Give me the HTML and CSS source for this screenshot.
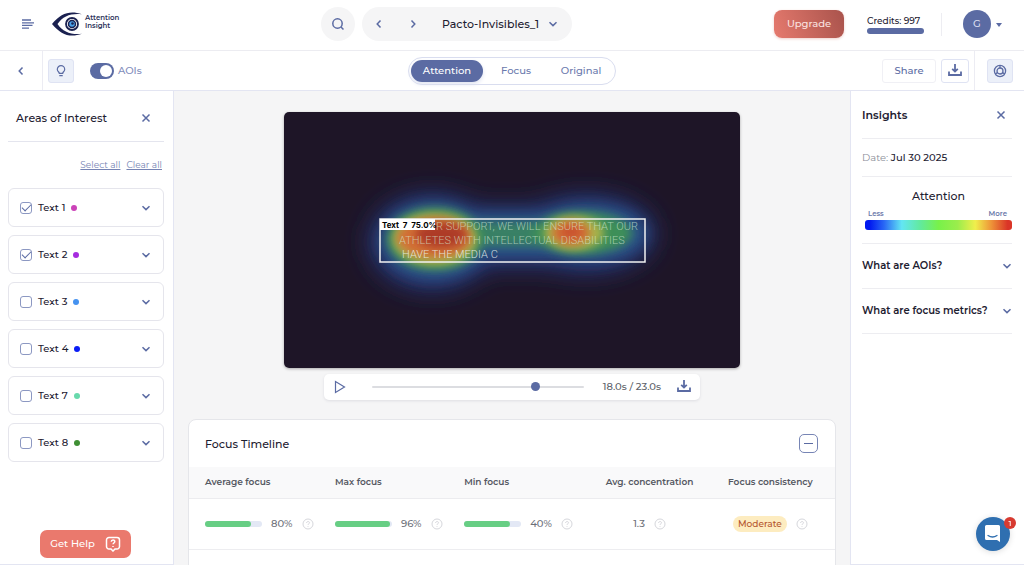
FILE: index.html
```html
<!DOCTYPE html>
<html lang="en">
<head>
<meta charset="utf-8">
<meta name="viewport" content="width=device-width, initial-scale=1">
<title>Attention Insight</title>
<link rel="stylesheet" href="styles.css">
</head>
<body>
<svg class="sprite" aria-hidden="true">
  <symbol id="down" viewBox="0 0 10 10"><path d="M1.5 3.2 5 6.6 8.500 3.200"/></symbol>
  <symbol id="left" viewBox="0 0 10 10"><path d="M6.500 1.500 3.200 5 6.500 8.500"/></symbol>
  <symbol id="right" viewBox="0 0 10 10"><path d="M3.500 1.500 6.800 5 3.500 8.500"/></symbol>
  <symbol id="close" viewBox="0 0 10 10"><path d="M1.500 1.500 8.500 8.500M8.500 1.500 1.500 8.500"/></symbol>
  <symbol id="download" viewBox="0 0 14 14"><path d="M7 0v7M4.200 4.800 7 7.600l2.800-2.800M1 7.500V11h12V7.500" stroke-width="1.800"/></symbol>
  <symbol id="hint" viewBox="0 0 12 12"><circle cx="6" cy="6" r="5"/><path d="M4.600 5c0-2 2.900-1.900 2.900-.2 0 1-1.500 1-1.500 2.100M6 8v.8"/></symbol>
</svg>

<header class="header">
  <div class="brand">
    <button class="bare" aria-label="Menu"><svg class="menu-icon" viewBox="0 0 12 10"><path d="M0 1h9M0 3.800h12M0 6.400h10.500M0 9.200h7"/></svg></button>
    <a class="logo" href="#">
      <svg class="eye" viewBox="0 0 31 24" aria-hidden="true">
        <path fill="#1b2150" d="M30 2.200C18-2 9 1 0 12c9 11 18 14 30 9.800C19 23 11 20 5.500 12 11 4 19 1 30 2.200Z"/>
        <circle cx="20" cy="12" r="6" fill="#fff" stroke="#1b2150" stroke-width="1.800"/>
        <circle cx="20" cy="12" r="3.500" fill="#4aa0e8" stroke="#1b2150" stroke-width="1.500"/>
        <circle cx="20.500" cy="11.500" r="1.300" fill="#1b2150"/>
      </svg>
      <span class="wordmark"><span>Attention</span><span>Insight</span></span>
    </a>
  </div>
  <div class="finder">
    <button class="round" aria-label="Search"><svg class="search-icon" viewBox="0 0 14 14"><circle cx="6.500" cy="6.500" r="4.700"/><path d="m10 10 2.500 2.500"/></svg></button>
    <div class="switcher">
      <button class="bare" aria-label="Previous"><svg class="icon"><use href="#left"/></svg></button>
      <button class="bare" aria-label="Next"><svg class="icon"><use href="#right"/></svg></button>
      <button class="bare project">Pacto-Invisibles_1 <svg class="icon"><use href="#down"/></svg></button>
    </div>
  </div>
  <div class="account">
    <button class="upgrade">Upgrade</button>
    <div class="credits"><span>Credits: 997</span><div class="credit-bar"></div></div>
    <button class="bare profile" aria-label="Profile"><span class="avatar">G</span><span class="caret"></span></button>
  </div>
</header>

<nav class="toolbar">
  <div class="tools">
    <button class="bare back" aria-label="Back"><svg class="icon"><use href="#left"/></svg></button>
    <button class="square tinted" aria-label="Tips"><svg class="bulb" viewBox="0 0 10 12"><path d="M3.300 8.300C3.300 7 1.300 6.300 1.300 4.400a3.700 3.700 0 0 1 7.400 0c0 1.900-2 2.600-2 3.900ZM3.300 10.700h3.400"/></svg></button>
    <label class="toggle"><input type="checkbox" checked>AOIs</label>
  </div>
  <div class="tabs">
    <button class="tab active">Attention</button>
    <button class="tab">Focus</button>
    <button class="tab">Original</button>
  </div>
  <div class="tools end">
    <button class="share">Share</button>
    <button class="square wide" aria-label="Download"><svg class="dl"><use href="#download"/></svg></button>
    <div class="target-cell"><button class="square tinted" aria-label="Insights"><svg class="target" viewBox="0 0 14 14"><circle cx="7" cy="7" r="5.600"/><circle cx="7" cy="7" r="3"/><path d="M7 1.400V4M4.600 8.600 2.200 9.800M9.400 8.600l2.400 1.200"/></svg></button></div>
  </div>
</nav>

<div class="layout">
  <aside class="areas">
    <div class="areas-head"><h2>Areas of Interest</h2><button class="bare" aria-label="Close"><svg class="icon"><use href="#close"/></svg></button></div>
    <div class="links"><a href="#">Select all</a><a href="#">Clear all</a></div>
    <ul class="list">
      <li><label><input type="checkbox" checked>Text 1<i class="dot pink"></i></label><button class="bare" aria-label="Expand Text 1"><svg class="icon"><use href="#down"/></svg></button></li>
      <li><label><input type="checkbox" checked>Text 2<i class="dot purple"></i></label><button class="bare" aria-label="Expand Text 2"><svg class="icon"><use href="#down"/></svg></button></li>
      <li><label><input type="checkbox">Text 3<i class="dot sky"></i></label><button class="bare" aria-label="Expand Text 3"><svg class="icon"><use href="#down"/></svg></button></li>
      <li><label><input type="checkbox">Text 4<i class="dot blue"></i></label><button class="bare" aria-label="Expand Text 4"><svg class="icon"><use href="#down"/></svg></button></li>
      <li><label><input type="checkbox">Text 7<i class="dot mint"></i></label><button class="bare" aria-label="Expand Text 7"><svg class="icon"><use href="#down"/></svg></button></li>
      <li><label><input type="checkbox">Text 8<i class="dot green"></i></label><button class="bare" aria-label="Expand Text 8"><svg class="icon"><use href="#down"/></svg></button></li>
    </ul>
    <button class="help">Get Help <svg class="help-icon" viewBox="0 0 16 16"><path d="M4 1.500h8a2.500 2.500 0 0 1 2.500 2.500v6.500A2.500 2.500 0 0 1 12 13h-2l-2 2-2-2H4a2.500 2.500 0 0 1-2.500-2.500V4A2.500 2.500 0 0 1 4 1.500Z"/><path d="M6.300 5.800c0-2.300 3.500-2.200 3.500-.2C9.800 7 8 7 8 8.300M8 10v1"/></svg></button>
  </aside>

  <main class="main">
    <svg class="video" viewBox="0 0 456 256" role="img" aria-label="Attention heatmap">
      <defs>
        <filter id="b14" x="-50%" y="-100%" width="200%" height="300%"><feGaussianBlur stdDeviation="13"/></filter>
        <filter id="b8" x="-50%" y="-100%" width="200%" height="300%"><feGaussianBlur stdDeviation="8"/></filter>
        <filter id="b5" x="-50%" y="-100%" width="200%" height="300%"><feGaussianBlur stdDeviation="5"/></filter>
        <filter id="b4" x="-50%" y="-100%" width="200%" height="300%"><feGaussianBlur stdDeviation="4"/></filter>
      </defs>
      <rect width="456" height="256" fill="#1e1527"/>
      <g filter="url(#b14)" fill="#27377b"><ellipse cx="148" cy="130" rx="62" ry="47"/><rect x="140" y="96" width="175" height="58" rx="28"/><ellipse cx="302" cy="122" rx="68" ry="38"/></g>
      <g filter="url(#b8)" fill="#2c5688"><ellipse cx="150" cy="129" rx="53" ry="38"/><rect x="160" y="102" width="150" height="42" rx="18"/><ellipse cx="304" cy="121" rx="58" ry="28"/></g>
      <g filter="url(#b5)" fill="#3d8f59"><ellipse cx="151" cy="127" rx="48" ry="31"/><rect x="170" y="110" width="100" height="24" rx="12" opacity=".75"/><ellipse cx="298" cy="121" rx="50" ry="21"/></g>
      <g filter="url(#b4)" fill="#a9b34b"><ellipse cx="151" cy="127" rx="42" ry="26"/><ellipse cx="290" cy="121" rx="30" ry="17"/></g>
      <g filter="url(#b4)" fill="#d37034"><ellipse cx="150" cy="126" rx="37" ry="20"/><ellipse cx="287" cy="121" rx="19" ry="12"/></g>
      <g filter="url(#b5)"><ellipse cx="157" cy="123" rx="26" ry="13" fill="#ad3a26"/><ellipse cx="287" cy="120" rx="11" ry="6" fill="#c84e2e"/></g>
      <g class="caption">
        <text x="354" y="118" text-anchor="end">R SUPPORT, WE WILL ENSURE THAT OUR</text>
        <text x="115" y="132">ATHLETES WITH INTELLECTUAL DISABILITIES</text>
        <text x="118" y="146" class="bright">HAVE THE MEDIA C</text>
      </g>
      <rect x="96" y="107" width="265" height="43" fill="none" stroke="#f2f2f2" stroke-width="1.500"/>
      <rect x="96" y="107" width="55" height="11" fill="#fff"/>
      <text x="98" y="116" class="tag">Text&#160; 7&#160; 75.0%</text>
    </svg>
    <div class="player">
      <button class="bare" aria-label="Play"><svg class="play" viewBox="0 0 12 14"><path d="M1.500 1.500v11L10.500 7Z"/></svg></button>
      <input class="seek" type="range" min="0" max="23" step="0.1" value="18" aria-label="Playback position">
      <span class="time">18.0s / 23.0s</span>
      <button class="bare" aria-label="Download video"><svg class="dl"><use href="#download"/></svg></button>
    </div>
    <section class="card">
      <div class="card-head"><h2>Focus Timeline</h2><button class="collapse" aria-label="Collapse"><span></span></button></div>
      <table>
        <thead><tr><th class="first">Average focus</th><th>Max focus</th><th>Min focus</th><th class="mid conc">Avg. concentration</th><th class="mid">Focus consistency</th></tr></thead>
        <tbody>
          <tr>
            <td class="first"><div class="metric"><div class="bar"><div style="width:80%"></div></div><span>80%</span><svg class="hint"><use href="#hint"/></svg></div></td>
            <td><div class="metric"><div class="bar"><div style="width:96%"></div></div><span>96%</span><svg class="hint"><use href="#hint"/></svg></div></td>
            <td><div class="metric"><div class="bar"><div style="width:80%"></div></div><span>40%</span><svg class="hint"><use href="#hint"/></svg></div></td>
            <td><div class="metric centered"><span>1.3</span><svg class="hint"><use href="#hint"/></svg></div></td>
            <td><div class="metric centered"><span class="badge">Moderate</span><svg class="hint"><use href="#hint"/></svg></div></td>
          </tr>
        </tbody>
      </table>
      <div class="rest"></div>
    </section>
  </main>

  <aside class="insights">
    <div class="insights-head"><h2>Insights</h2><button class="bare" aria-label="Close insights"><svg class="icon"><use href="#close"/></svg></button></div>
    <p class="date">Date: <b>Jul 30 2025</b></p>
    <div class="legend">
      <h3>Attention</h3>
      <div class="scale"><span>Less</span><span>More</span></div>
      <div class="spectrum"></div>
    </div>
    <button class="question">What are AOIs?<svg class="icon"><use href="#down"/></svg></button>
    <button class="question">What are focus metrics?<svg class="icon"><use href="#down"/></svg></button>
  </aside>
</div>

<button class="chat" aria-label="Open chat">
  <svg viewBox="0 0 18 20" aria-hidden="true"><path fill="#fff" d="M2.500 1h12A1.500 1.500 0 0 1 16 2.500V18l-3-2H2.500A1.500 1.500 0 0 1 1 14.500v-12A1.500 1.500 0 0 1 2.500 1Z"/><path d="M4 11.500q4.500 3 9 0" fill="none" stroke="#2f6fb0" stroke-width="1.300" stroke-linecap="round"/></svg>
  <span>1</span>
</button>
</body>
</html>
```
FILE: styles.css
```css
* { box-sizing: border-box; }
:root { --blue: #5b6ba3; --line: #e3e5f2; --ink: #1d2030; }
body {
  margin: 0; height: 100vh; display: flex; flex-direction: column; overflow: hidden;
  background: #fff; color: var(--ink);
  font: 500 10px/16px Montserrat, Inter, "Liberation Sans", sans-serif;
}
button, input { font: inherit; color: inherit; margin: 0; }
button { cursor: pointer; padding: 0; white-space: nowrap; }
h2, h3, p, ul { margin: 0; padding: 0; }
svg { display: block; fill: none; stroke: var(--blue); stroke-width: 1.5; }
.eye, .chat svg { stroke: none; }
.sprite { position: absolute; width: 0; height: 0; }
.bare { border: 0; background: none; display: flex; align-items: center; }
.icon { width: 10px; height: 10px; }

.header {
  flex: none; height: 51px; padding: 0 22px 2px; border-bottom: 1px solid #ececf1;
  display: flex; align-items: center; justify-content: space-between;
}
.brand, .finder, .account, .switcher, .logo, .profile { display: flex; align-items: center; }
.brand { gap: 18px; }
.menu-icon { width: 12px; height: 10px; stroke-width: 1.3; }
.logo { gap: 2px; color: #2b3158; text-decoration: none; font-size: 7px; line-height: 8px; font-weight: 600; }
.wordmark { display: grid; padding-bottom: 4px; }
.eye { width: 31px; height: 24px; }
.finder { gap: 7px; }
.round { width: 34px; height: 34px; border: 0; border-radius: 50%; background: #f5f5f6; display: grid; place-items: center; }
.search-icon { width: 14px; height: 14px; }
.switcher { width: 210px; height: 34px; padding: 0 14px 0 12px; border-radius: 17px; background: #f5f5f6; }
.switcher .bare + .bare { margin-left: 24px; }
.switcher .bare + .project { margin-left: auto; gap: 9px; font-size: 11px; }
.upgrade {
  width: 70px; height: 28px; border: 0; border-radius: 8px; color: #fbe3e0;
  background: linear-gradient(70deg, #e67a6e, #a9534c); box-shadow: 0 1px 3px #efcfcb;
}
.credits { margin-left: 23px; width: 57px; font-size: 9px; line-height: 12px; white-space: nowrap; }
.credit-bar { height: 6px; margin-top: 1px; border-radius: 3px; background: var(--blue); }
.profile { margin-left: 17px; padding-left: 21px; gap: 5px; height: 23px; border-left: 1px solid #ededf2; }
.avatar { width: 28px; height: 28px; border-radius: 50%; background: var(--blue); color: #d9def0; line-height: 28px; text-align: center; }
.caret { border: 3px solid transparent; border-top: 4px solid var(--blue); border-bottom: 0; margin-top: 2px; }

.toolbar { flex: none; height: 40px; border-bottom: 1px solid var(--line); display: grid; grid-template-columns: 1fr auto 1fr; align-items: center; color: var(--blue); }
.tools { display: flex; align-items: center; height: 100%; }
.back { width: 43px; height: 100%; justify-content: center; border-right: 1px solid #ececf3; }
.square { width: 26px; height: 24px; border: 1px solid #dfe3f3; border-radius: 3px; background: #fff; display: grid; place-items: center; }
.tinted { background: #ecf0f9; }
.tools > .tinted { margin-left: 5px; }
.bulb { width: 10px; height: 12px; stroke-width: 1.2; }
.toggle { display: flex; align-items: center; gap: 4px; margin-left: 16px; color: #7f8dbb; }
.toggle input { appearance: none; width: 24px; height: 16px; border-radius: 8px; background: var(--blue); padding: 2px; display: flex; justify-content: flex-end; }
.toggle input::after { content: ""; width: 12px; height: 12px; border-radius: 50%; background: #fff; }
.tabs { display: flex; height: 28px; padding: 2px; border: 1px solid #d9ddef; border-radius: 14px; }
.tab { width: 66px; border: 0; border-radius: 11px; background: none; color: #6a79ad; }
.tab:last-child { width: 64px; }
.tab.active { width: 72px; color: #fff; background: var(--blue); box-shadow: 0 2px 4px #dfe3f1; }
.end { justify-content: flex-end; }
.share { width: 54px; height: 24px; border: 1px solid #f0f0f5; border-radius: 3px; background: #fff; }
.wide { width: 28px; margin: 0 5px; }
.dl { width: 14px; height: 14px; }
.target-cell { height: 100%; width: 50px; border-left: 1px solid #ececf3; display: grid; place-items: center; }
.target { width: 14px; height: 14px; stroke-width: 1.3; }

.layout { flex: 1; min-height: 0; display: grid; grid-template-columns: 174px minmax(0, 1fr) 174px; }
.areas { display: flex; flex-direction: column; padding: 0 9px 6px 8px; border-right: 1px solid var(--line); border-bottom: 1px solid var(--line); }
.areas-head { height: 51px; padding: 3px 13px 0 8px; border-bottom: 1px solid #e4e5ee; display: flex; align-items: center; justify-content: space-between; }
h2 { font-size: 11px; line-height: 16px; font-weight: 500; }
.links { display: flex; justify-content: flex-end; gap: 6px; padding: 15px 2px 15px; font-size: 9px; font-weight: 400; }
.links a { color: #7583b3; }
.list { list-style: none; display: grid; gap: 8px; }
.list li { height: 39px; padding: 0 12px 0 11px; border: 1px solid #e5e5ec; border-radius: 6px; display: flex; align-items: center; justify-content: space-between; }
.list label { display: flex; align-items: center; gap: 6px; }
.list input { appearance: none; width: 12px; height: 12px; border: 1px solid #8c98c2; border-radius: 3px; display: grid; place-items: center; }
.list input:checked::after { content: ""; width: 8px; height: 4px; margin-top: -2px; border: solid var(--blue); border-width: 0 0 1px 1px; transform: rotate(-45deg); }
.dot { width: 6px; height: 6px; border-radius: 50%; }
.pink { background: #cb43b8; } .purple { background: #a62bdf; } .sky { background: #4592f0; }
.blue { background: #0a1df5; } .mint { background: #68d9ac; } .green { background: #3f8f34; }
.help { margin-top: auto; margin-left: 32px; width: 91px; height: 28px; border: 0; border-radius: 7px; background: #ea796d; color: #fff; display: flex; align-items: center; justify-content: center; gap: 10px; }
.help-icon { width: 16px; height: 16px; stroke: #fff; }

.main { background: #f5f5f6; padding: 21px 14px 0; display: flex; flex-direction: column; align-items: center; overflow: hidden; }
.video { flex: none; width: 100%; max-width: 456px; border-radius: 5px; stroke: none; box-shadow: 0 1px 3px #aaa; }
.caption { font: 300 11px Roboto, sans-serif; fill: #d8efd9; fill-opacity: .65; }
.bright { fill: #eaf3ef; fill-opacity: .85; }
.tag { font: 700 8px Inter, sans-serif; fill: #000; }
.player { flex: none; width: 100%; max-width: 376px; height: 26px; margin-top: 6px; padding: 0 9px 0 10px; border-radius: 5px; background: #fff; box-shadow: 0 1px 3px #dddde2; display: flex; align-items: center; }
.play { width: 12px; height: 14px; stroke-width: 1.2; }
.seek { appearance: none; flex: 1; min-width: 0; height: 10px; margin: 0 19px 0 26px; background: none; }
.seek::-webkit-slider-runnable-track { height: 2px; border-radius: 1px; background: #dcdde1; }
.seek::-webkit-slider-thumb { appearance: none; width: 9px; height: 9px; margin-top: -4px; border-radius: 50%; background: var(--blue); }
.time { color: #5c5f68; margin-right: 16px; white-space: nowrap; }
.card { flex: none; width: 100%; margin-top: 19px; background: #fff; border: 1px solid #e5e6ea; border-radius: 8px; overflow: hidden; }
.card-head { height: 47px; padding: 0 17px 0 16px; display: flex; align-items: center; justify-content: space-between; }
.collapse { width: 19px; height: 19px; border: 1px solid #7785b5; border-radius: 5px; background: #fff; display: grid; place-items: center; }
.collapse span { width: 9px; height: 1px; background: var(--blue); }
table { width: 100%; border-collapse: collapse; table-layout: fixed; }
th { height: 31px; padding: 0; background: #f9f9fa; border-bottom: 1px solid #ececef; color: #555862; font-size: 9px; font-weight: 600; text-align: left; width: 20%; }
th.first { width: 22.6%; padding-left: 16px; }
th.conc { width: 17.4%; }
th.mid { text-align: center; }
td { height: 51px; padding: 0; border-bottom: 1px solid #ededf0; }
td.first { padding-left: 16px; }
.metric { display: flex; align-items: center; gap: 9px; color: #6c6f78; }
.centered { justify-content: center; }
.bar { width: 57px; height: 6px; border-radius: 3px; background: #e3e8f5; }
.bar div { height: 100%; border-radius: 3px; background: #67ce84; }
.hint { width: 12px; height: 12px; stroke: #d6d7dc; stroke-width: 1; }
.badge { padding: 0 5px; border-radius: 8px; background: #fdecc0; color: #b4552c; font-size: 9px; }
.rest { height: 60px; }

.insights { padding: 0 12px 0 11px; border-left: 1px solid var(--line); border-bottom: 1px solid var(--line); }
.insights-head { height: 48px; padding-right: 6px; border-bottom: 1px solid #ededf1; display: flex; align-items: center; justify-content: space-between; }
.insights h2 { font-weight: 600; }
.date { height: 38px; line-height: 37px; border-bottom: 1px solid #ededf1; color: #8a8d98; font-weight: 400; }
.date b { color: var(--ink); font-weight: 500; }
.legend { height: 67px; padding: 11px 0 0 3px; border-bottom: 1px solid #ededf1; }
.legend h3 { font-size: 11px; font-weight: 500; text-align: center; }
.scale { display: flex; justify-content: space-between; padding: 0 5px 0 3px; margin-top: 4px; font-size: 7px; line-height: 12px; font-weight: 600; color: #6b79aa; }
.spectrum { height: 10px; border-radius: 3px; background: linear-gradient(90deg, #0018f0 3%, #2968f5 13%, #63e6f3 25%, #62ea9b 38%, #78f14a 50%, #9bed4c 63%, #f0ef4c 75%, #ee9338 86%, #da3527 97%); }
.question { width: 100%; height: 45px; border: 0; border-bottom: 1px solid #ededf1; background: none; display: flex; align-items: center; justify-content: space-between; font-weight: 600; }

.chat { position: fixed; right: 14px; bottom: 14px; width: 34px; height: 34px; border: 0; border-radius: 50%; background: #2f6fb0; display: grid; place-items: center; box-shadow: 0 1px 6px #ddd; }
.chat svg { width: 18px; height: 20px; }
.chat span { position: absolute; top: 0; right: -6px; width: 12px; height: 12px; border-radius: 50%; background: #d73a30; color: #fff; font-size: 8px; line-height: 12px; }
```
